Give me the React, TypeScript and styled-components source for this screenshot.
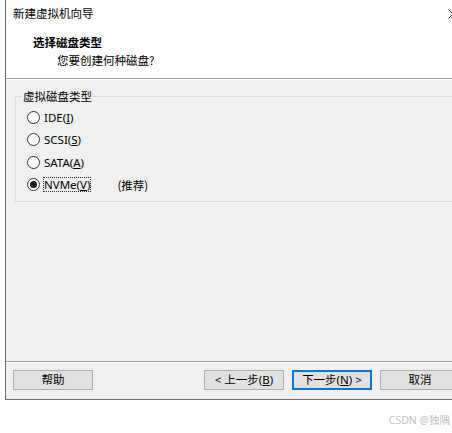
import React from 'react';
import styled, { createGlobalStyle } from 'styled-components';

const GlobalStyle = createGlobalStyle`
  html, body {
    margin: 0;
    padding: 0;
    background: #ffffff;
    overflow: hidden;
  }
  body {
    font-family: "Noto Sans", "Noto Sans CJK SC", sans-serif;
    font-size: 11.5px;
    color: #000;
  }
`;

const Page = styled.div`
  width: 452px;
  height: 433px;
  overflow: hidden;
  display: flex;
  flex-direction: column;
`;

const Window = styled.div`
  margin-left: 5px;
  width: 464px;
  height: 399px;
  flex: none;
  display: flex;
  flex-direction: column;
  border-left: 1px solid #6e6e6e;
  border-bottom: 1px solid #6e6e6e;
  background: #f0f0f0;
`;

const Header = styled.div`
  background: #ffffff;
  height: 78px;
  flex: none;
  border-bottom: 1px solid #a0a0a0;
  box-shadow: 0 1px 0 #ffffff;
  display: flex;
  flex-direction: column;
`;

const TitleBar = styled.div`
  height: 28px;
  display: flex;
  align-items: center;
  justify-content: space-between;
  padding: 0 12px 0 7px;
`;

const Title = styled.span`
  font-family: "Noto Sans CJK SC", sans-serif;
  line-height: 1;
`;

const StepTitle = styled.div`
  padding-left: 27px;
  margin-top: 5px;
  font-family: "Noto Sans CJK SC", sans-serif;
  font-weight: 700;
  line-height: 18px;
`;

const StepHint = styled.div`
  padding-left: 51px;
  font-family: "Noto Sans CJK SC", sans-serif;
  line-height: 18px;
`;

const Body = styled.div`
  flex: 1;
  padding: 10px 0 0 9px;
  border-bottom: 1px solid #a0a0a0;
  box-shadow: 0 1px 0 #ffffff;
`;

const GroupBox = styled.fieldset`
  margin: 0;
  width: 460px;
  height: 113px;
  box-sizing: border-box;
  border: 1px solid #dcdcdc;
  border-radius: 0;
  padding: 3px 0 0 11px;
  display: flex;
  flex-direction: column;
`;

const Legend = styled.legend`
  margin-left: -5px;
  padding: 0 1px;
  font-family: "Noto Sans CJK SC", sans-serif;
  line-height: 14px;
`;

const RadioRow = styled.label`
  flex: none;
  height: 22.5px;
  display: flex;
  align-items: center;
  gap: 3px;
`;

const RadioDot = styled.span<{ $checked?: boolean }>`
  width: 13px;
  height: 13px;
  box-sizing: border-box;
  border-radius: 50%;
  border: 1px solid #333333;
  background: #ffffff;
  display: flex;
  align-items: center;
  justify-content: center;
  &::after {
    content: '';
    width: 7px;
    height: 7px;
    border-radius: 50%;
    background: ${(p) => (p.$checked ? '#1a1a1a' : 'transparent')};
  }
`;

const RadioText = styled.span<{ $focused?: boolean }>`
  line-height: 15px;
  padding: 0 1px;
  outline: ${(p) => (p.$focused ? '1px dotted #333' : 'none')};
  outline-offset: -1px;
`;

const Key = styled.span`
  text-decoration: underline;
  text-underline-offset: 1px;
`;

const Note = styled.span`
  margin-left: 23px;
  font-family: "Noto Sans CJK SC", sans-serif;
`;

const Footer = styled.div`
  height: 37px;
  flex: none;
  display: flex;
  align-items: flex-start;
  justify-content: space-between;
  padding: 8px 10px 0 7px;
  box-sizing: border-box;
`;

const ButtonGroup = styled.div`
  display: flex;
  gap: 8px;
`;

const Button = styled.button<{ $default?: boolean }>`
  width: 80px;
  height: 20px;
  margin: 0;
  padding: 0;
  box-sizing: border-box;
  background: #e1e1e1;
  border: 1px solid ${(p) => (p.$default ? '#0078d7' : '#adadad')};
  box-shadow: ${(p) => (p.$default ? 'inset 0 0 0 1px #0078d7' : 'none')};
  font-family: "Noto Sans", "Noto Sans CJK SC", sans-serif;
  font-size: 11.5px;
  color: #000;
  line-height: 1;
  display: flex;
  align-items: center;
  justify-content: center;
`;

const Watermark = styled.div`
  flex: 1;
  display: flex;
  align-items: center;
  justify-content: flex-end;
  padding: 6px 2px 0 0;
  color: #c2c2c2;
  font-size: 10.5px;
  font-family: "Noto Sans", "Noto Sans CJK SC", sans-serif;
`;

const options = [
  { label: 'IDE', key: 'I' },
  { label: 'SCSI', key: 'S' },
  { label: 'SATA', key: 'A' },
  { label: 'NVMe', key: 'V', checked: true, note: '(推荐)' },
];

export default function App() {
  return (
    <Page>
      <GlobalStyle />
      <Window>
        <Header>
          <TitleBar>
            <Title>新建虚拟机向导</Title>
            <svg width="10" height="10" viewBox="0 0 10 10">
              <path d="M0.5 0.5 L9.5 9.5 M9.5 0.5 L0.5 9.5" stroke="#333" strokeWidth="1" fill="none" />
            </svg>
          </TitleBar>
          <StepTitle>选择磁盘类型</StepTitle>
          <StepHint>您要创建何种磁盘?</StepHint>
        </Header>
        <Body>
          <GroupBox>
            <Legend>虚拟磁盘类型</Legend>
            {options.map((o) => (
              <RadioRow key={o.label}>
                <RadioDot $checked={o.checked} />
                <RadioText $focused={o.checked}>
                  {o.label}(<Key>{o.key}</Key>)
                </RadioText>
                {o.note && <Note>{o.note}</Note>}
              </RadioRow>
            ))}
          </GroupBox>
        </Body>
        <Footer>
          <Button>帮助</Button>
          <ButtonGroup>
            <Button>&lt; 上一步(<Key>B</Key>)</Button>
            <Button $default>下一步(<Key>N</Key>) &gt;</Button>
            <Button>取消</Button>
          </ButtonGroup>
        </Footer>
      </Window>
      <Watermark>CSDN @独隅</Watermark>
    </Page>
  );
}
